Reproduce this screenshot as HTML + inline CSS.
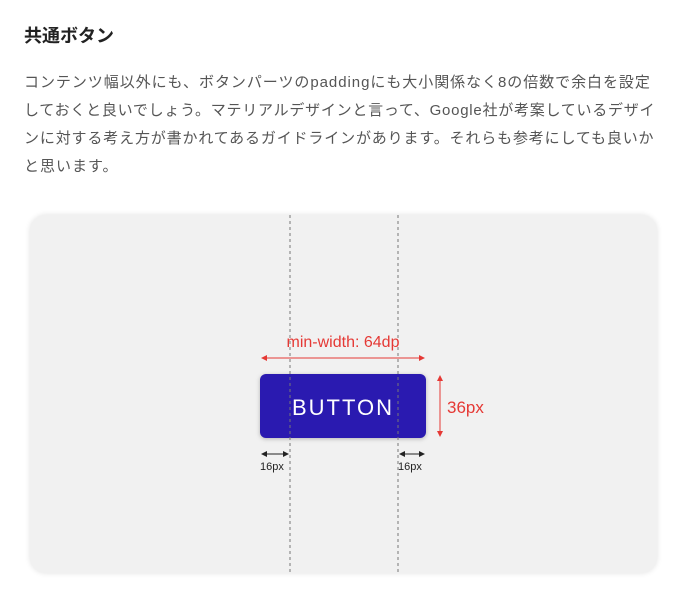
<!DOCTYPE html>
<html><head><meta charset="utf-8"><style>
body{margin:0;background:#fff;width:692px;height:597px;overflow:hidden;position:relative;font-family:"Liberation Sans","Noto Sans CJK JP",sans-serif;color:#333}
h2{position:absolute;left:24px;top:24px;margin:0;font-size:18px;font-weight:bold;line-height:24px;color:#222}
.p{position:absolute;left:24px;top:69px;font-size:15px;line-height:28px;color:#555;white-space:nowrap}
.card{position:absolute;left:30px;top:215px;width:627px;height:358px;background:#f1f1f1;border-radius:16px;box-shadow:0 0 6px rgba(0,0,0,.12)}
</style></head><body>
<h2>共通ボタン</h2>
<div class="p">
<div style="letter-spacing:0.95px">コンテンツ幅以外にも、ボタンパーツのpaddingにも大小関係なく8の倍数で余白を設定</div>
<div style="letter-spacing:0.75px">しておくと良いでしょう。マテリアルデザインと言って、Google社が考案しているデザイ</div>
<div style="letter-spacing:0.85px">ンに対する考え方が書かれてあるガイドラインがあります。それらも参考にしても良いか</div>
<div style="letter-spacing:1px">と思います。</div>
</div>
<div class="card"></div>
<svg width="692" height="597" style="position:absolute;left:0;top:0">
<defs><marker id="r" markerWidth="6" markerHeight="6" refX="5" refY="3" orient="auto-start-reverse"><path d="M0,0L6,3L0,6z" fill="#e53935"/></marker>
<marker id="k" markerWidth="6" markerHeight="6" refX="5" refY="3" orient="auto-start-reverse"><path d="M0,0L6,3L0,6z" fill="#222"/></marker></defs>
<rect x="260" y="374" width="166" height="64" rx="6" fill="#2a1ab0" style="filter:drop-shadow(0 1px 2px rgba(0,0,0,.25))"/>
<text x="343" y="415" text-anchor="middle" fill="#fff" font-size="22" letter-spacing="2" font-family="Liberation Sans,sans-serif">BUTTON</text>
<line x1="290" y1="215" x2="290" y2="573" stroke="#777" stroke-dasharray="3,3"/>
<line x1="398" y1="215" x2="398" y2="573" stroke="#777" stroke-dasharray="3,3"/>
<text x="343" y="347" text-anchor="middle" fill="#e53935" font-size="16" font-family="Liberation Sans,sans-serif">min-width: 64dp</text>
<line x1="262" y1="358" x2="424" y2="358" stroke="#e53935" marker-start="url(#r)" marker-end="url(#r)"/>
<line x1="440" y1="376" x2="440" y2="436" stroke="#e53935" marker-start="url(#r)" marker-end="url(#r)"/>
<text x="447" y="413" fill="#e53935" font-size="17" font-family="Liberation Sans,sans-serif">36px</text>
<line x1="262" y1="454" x2="288" y2="454" stroke="#222" marker-start="url(#k)" marker-end="url(#k)"/>
<line x1="400" y1="454" x2="424" y2="454" stroke="#222" marker-start="url(#k)" marker-end="url(#k)"/>
<text x="260" y="470" fill="#222" font-size="11" font-family="Liberation Sans,sans-serif">16px</text>
<text x="398" y="470" fill="#222" font-size="11" font-family="Liberation Sans,sans-serif">16px</text>
</svg>
</body></html>
